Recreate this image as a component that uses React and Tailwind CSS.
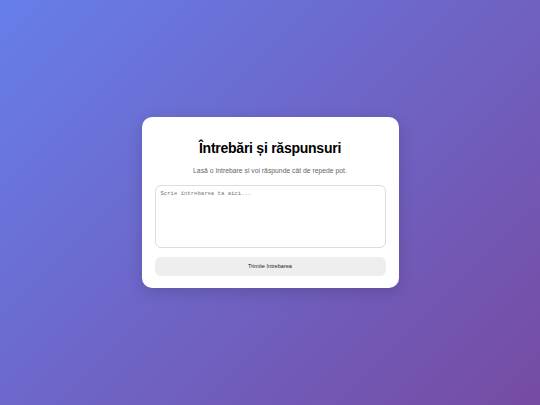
export default function App() {
  return (
    <div
      className="min-h-screen w-full flex items-center justify-center bg-[linear-gradient(135deg,#667eea_0%,#764ba2_100%)]"
      style={{ fontFamily: '"Liberation Sans", Arial, sans-serif' }}
    >
      <div className="w-[257px] bg-white rounded-[10px] shadow-[0_4px_16px_rgba(0,0,0,0.15)] px-[13px] pt-[21px] pb-[12px] flex flex-col">
        <h1 className="text-center font-bold text-[14px] tracking-[-0.25px] leading-[20px] text-black">
          Întrebări și răspunsuri
        </h1>
        <p className="text-center text-[6.8px] leading-[10px] text-[#666] mt-[8px]">
          Lasă o întrebare și voi răspunde cât de repede pot.
        </p>
        <textarea
          className="mt-[9px] h-[63px] w-full resize-none rounded-[6px] border border-[#ddd] px-[5px] py-[4px] text-[5.6px] leading-[8px] outline-none placeholder:text-[#777]"
          style={{ fontFamily: '"Liberation Mono", "Courier New", monospace' }}
          placeholder="Scrie întrebarea ta aici..."
        />
        <button className="mt-[9px] h-[19px] w-full rounded-[6px] bg-[#eeeeee] text-[5.6px] text-[#222]">
          Trimite întrebarea
        </button>
      </div>
    </div>
  );
}
